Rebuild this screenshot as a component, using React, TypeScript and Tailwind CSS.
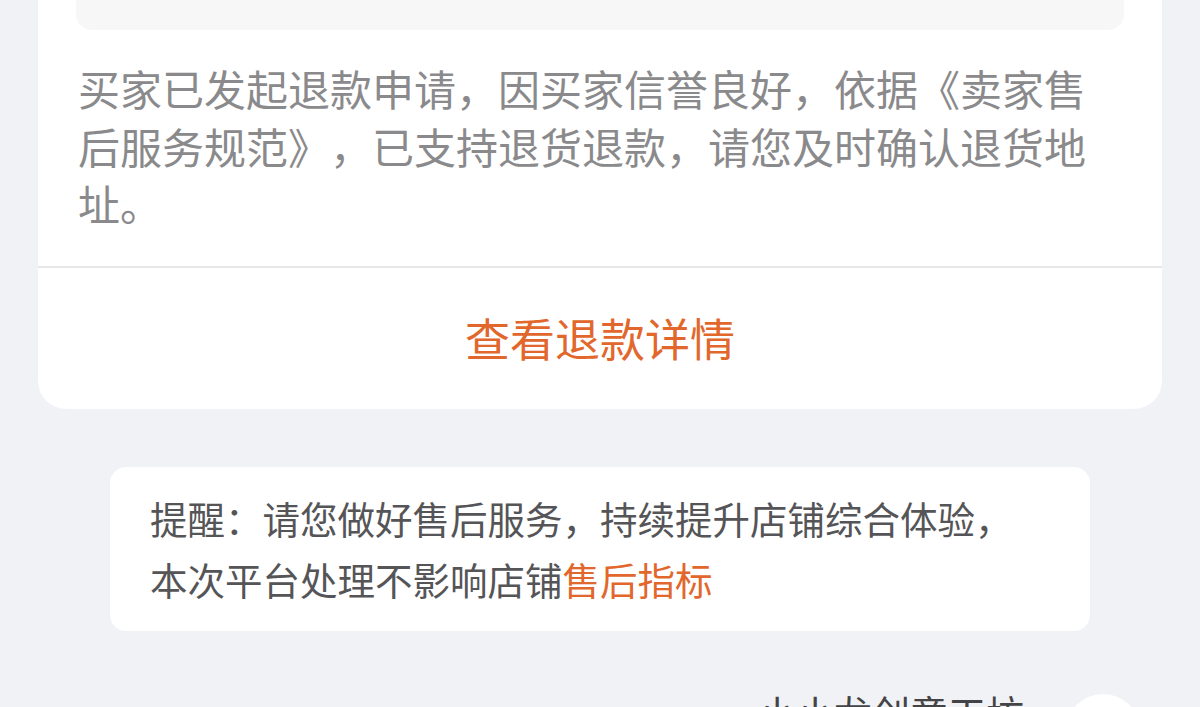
export default function App() {
  return (
    <div
      className="h-[707px] w-[1200px] overflow-hidden bg-[#f1f2f6] [text-spacing-trim:space-all]"
      style={{ fontFamily: '"Noto Sans CJK SC", "Noto Sans", sans-serif' }}
    >
      {/* refund card */}
      <div className="-mt-[120px] mx-[38px] rounded-[28px] bg-white pt-[20px]">
        <div className="mx-[38px] h-[130px] rounded-[16px] bg-[#f7f7f8]" />
        <p className="mt-[29px] px-[40px] pb-[34px] text-[42px] leading-[57.5px] text-[#8a8a8c]">
          买家已发起退款申请，因买家信誉良好，依据《卖家售后服务规范》，已支持退货退款，请您及时确认退货地址。
        </p>
        <div className="h-[2px] bg-[#e8e8ea]" />
        <div className="flex h-[141px] items-center justify-center">
          <span className="text-[45px] text-[#e2672c]">查看退款详情</span>
        </div>
      </div>

      {/* reminder */}
      <div className="ml-[110px] mt-[58px] h-[164px] w-[980px] rounded-[16px] bg-white px-[40px] pt-[20px] text-[37.5px] leading-[61px] text-[#555558]">
        <p>提醒：请您做好售后服务，持续提升店铺综合体验，</p>
        <p>
          本次平台处理不影响店铺<span className="text-[#e2672c]">售后指标</span>
        </p>
      </div>

      {/* next message, cut off by the screen edge */}
      <div className="mt-[63px] flex items-start justify-end pr-[60px]">
        <span className="mr-[42px] mt-[-4px] text-[38px] leading-[44px] text-[#444446]">小小龙创意工坊</span>
        <div className="h-[74px] w-[74px] rounded-full bg-white" />
      </div>
    </div>
  );
}
